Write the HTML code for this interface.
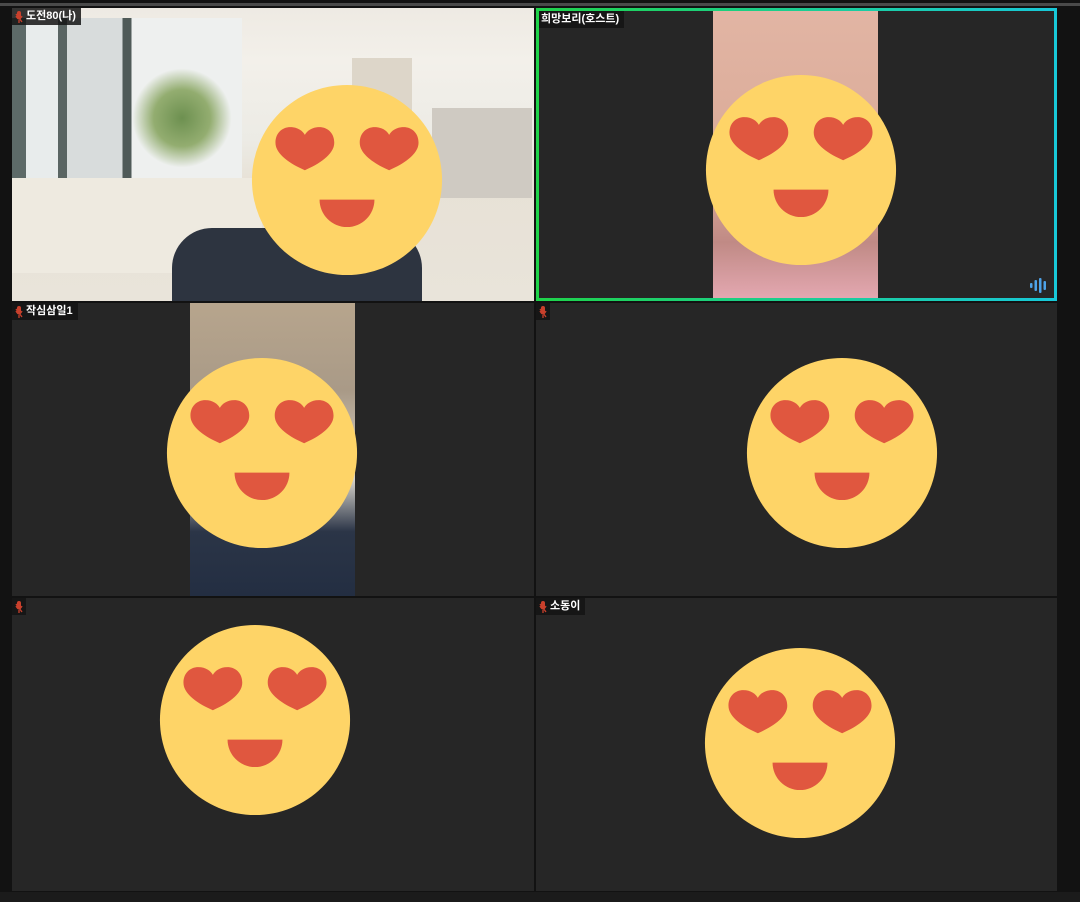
<!DOCTYPE html>
<html><head><meta charset="utf-8"><style>
body{margin:0;width:1080px;height:902px;background:#121212;position:relative;overflow:hidden;font-family:"Liberation Sans","Noto Sans CJK KR",sans-serif}
.top{position:absolute;left:0;top:3px;width:1080px;height:3px;background:#4a4a4a}
.bot{position:absolute;left:0;top:892px;width:1080px;height:10px;background:#1b1b1b}
.t{position:absolute;background:#262626;overflow:hidden}
.lab{position:absolute;left:0;top:0;height:17px;background:rgba(20,20,20,.85);color:#fff;font-size:11px;font-weight:bold;line-height:17px;padding:0 5px 0 3px;display:flex;align-items:center;gap:3px}
.mic{width:8px;height:12px;display:inline-block}
.face{position:absolute;width:196px;height:196px}
</style></head><body>
<svg width="0" height="0" style="position:absolute"><defs>
<path id="h" d="M0,21 C-14,15 -30,5 -30,-7 C-30,-18 -22,-23 -15,-23 C-7,-23 -2,-19 0,-15 C2,-19 7,-23 15,-23 C22,-23 30,-18 30,-7 C30,5 14,15 0,21Z" fill="#e0573f"/>
<g id="f"><circle cx="100" cy="100" r="97" fill="#fed467"/>
<use href="#h" transform="translate(57,69)"/>
<use href="#h" transform="translate(143,69)"/>
<path d="M72,120 L128,120 A28,28 0 0 1 72,120 Z" fill="#e0573f"/></g>
<g id="m"><rect x="2" y="0" width="4" height="8" rx="2" fill="#c9402c"/><path d="M1,5 Q4,11 7,5 M4,9 V12 M1,3 L7,11" stroke="#c9402c" stroke-width="1.3" fill="none"/></g>
</defs></svg>
<div class="top"></div>
<!-- tile1 -->
<div class="t" style="left:12px;top:8px;width:522px;height:293px;background:linear-gradient(180deg,#eeeae3 0%,#f3f0ea 18%,#ecebe5 45%,#e7e1d6 60%,#e9e4da 100%)">
<div style="position:absolute;left:0;top:10px;width:230px;height:170px;background:linear-gradient(90deg,#5d6a68 0 6%,#e8ecec 6% 20%,#5a6563 20% 24%,#d8dcdc 24% 48%,#4f5a58 48% 52%,#eef0ef 52% 100%)"></div>
<div style="position:absolute;left:120px;top:60px;width:100px;height:100px;background:radial-gradient(#6d9050,#93ad70 40%,transparent 70%)"></div>
<div style="position:absolute;left:0;top:170px;width:250px;height:95px;background:#eeeae0"></div>
<div style="position:absolute;left:340px;top:50px;width:60px;height:190px;background:#ddd6c9"></div>
<div style="position:absolute;left:420px;top:100px;width:100px;height:90px;background:#cfcac2"></div>
<div style="position:absolute;left:160px;top:220px;width:250px;height:73px;background:#2d3440;border-radius:40px 40px 0 0"></div>
<div class="lab"><svg class="mic" viewBox="0 0 8 12"><use href="#m"/></svg>도전80(나)</div>
</div>
<!-- tile2 -->
<div class="t" style="left:536px;top:8px;width:521px;height:293px">
<div style="position:absolute;left:177px;top:0;width:165px;height:293px;background:linear-gradient(180deg,#e2b5a4,#d9a996 60%,#c08a85 80%,#e5a9b3)"></div>
<div style="position:absolute;left:0;top:0;right:0;bottom:0;border:3px solid;border-image:linear-gradient(90deg,#1fd34a,#18c8d8) 1"></div>
<div class="lab" style="left:3px;top:3px;padding-left:2px">희망보리(호스트)</div>
<svg style="position:absolute;left:494px;top:270px" width="18" height="15" viewBox="0 0 18 15"><g fill="#4da2e8"><rect x="0" y="5" width="2.5" height="5" rx="1"/><rect x="4.5" y="2" width="2.5" height="11" rx="1"/><rect x="9" y="0" width="2.5" height="15" rx="1"/><rect x="13.5" y="3" width="2.5" height="9" rx="1"/></g></svg>
</div>
<!-- tile3 -->
<div class="t" style="left:12px;top:303px;width:522px;height:293px">
<div style="position:absolute;left:178px;top:0;width:165px;height:293px;background:linear-gradient(180deg,#b7a58d 0%,#a99a87 30%,#d8d4cc 60%,#2b3547 78%,#232e42 100%)"></div>
<div class="lab"><svg class="mic" viewBox="0 0 8 12"><use href="#m"/></svg>작심삼일1</div>
</div>
<!-- tile4 -->
<div class="t" style="left:536px;top:303px;width:521px;height:293px">
<div class="lab" style="padding-right:3px"><svg class="mic" viewBox="0 0 8 12"><use href="#m"/></svg></div>
</div>
<!-- tile5 -->
<div class="t" style="left:12px;top:598px;width:522px;height:293px">
<div class="lab" style="padding-right:3px"><svg class="mic" viewBox="0 0 8 12"><use href="#m"/></svg></div>
</div>
<!-- tile6 -->
<div class="t" style="left:536px;top:598px;width:521px;height:293px">
<div class="lab"><svg class="mic" viewBox="0 0 8 12"><use href="#m"/></svg>소동이</div>
</div>
<svg class="face" style="left:249px;top:82px" viewBox="0 0 200 200"><use href="#f"/></svg>
<svg class="face" style="left:703px;top:72px" viewBox="0 0 200 200"><use href="#f"/></svg>
<svg class="face" style="left:164px;top:355px" viewBox="0 0 200 200"><use href="#f"/></svg>
<svg class="face" style="left:744px;top:355px" viewBox="0 0 200 200"><use href="#f"/></svg>
<svg class="face" style="left:157px;top:622px" viewBox="0 0 200 200"><use href="#f"/></svg>
<svg class="face" style="left:702px;top:645px" viewBox="0 0 200 200"><use href="#f"/></svg>
<div class="bot"></div>
</body></html>
